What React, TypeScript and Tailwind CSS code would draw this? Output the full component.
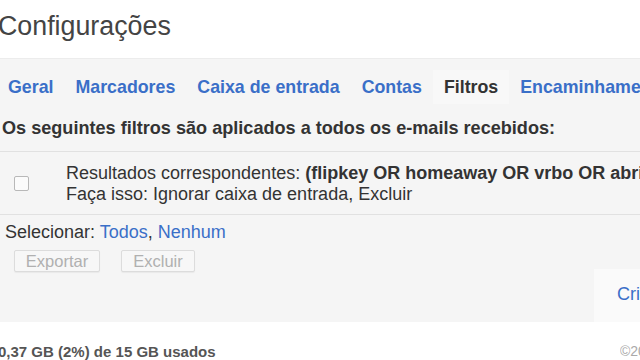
const tabs = [
  { label: "Geral", active: false },
  { label: "Marcadores", active: false },
  { label: "Caixa de entrada", active: false },
  { label: "Contas", active: false },
  { label: "Filtros", active: true },
  { label: "Encaminhamento e POP/IMAP", active: false },
];

export default function App() {
  return (
    <div
      className="w-[640px] h-[360px] overflow-hidden bg-white text-[#222]"
      style={{ fontFamily: '"Liberation Sans", Arial, sans-serif' }}
    >
      {/* Title */}
      <div className="h-[58px] pt-[11px]">
        <h1 className="-ml-[2px] text-[26.8px] leading-[30px] text-[#444] font-normal">Configurações</h1>
      </div>

      {/* Settings panel */}
      <div className="h-[264px] bg-[#f5f5f5] border-t border-[#ececec] flex flex-col">
        {/* Tabs */}
        <div className="mt-[11px] h-[34px] flex items-stretch whitespace-nowrap overflow-hidden">
          {tabs.map((t) => (
            <div
              key={t.label}
              className={`shrink-0 flex items-center text-[17.8px] font-bold px-[11px] first:pl-[8px] ${
                t.active ? "bg-[#f8f8f8] text-[#333]" : "text-[#3a6fc8]"
              }`}
            >
              {t.label}
            </div>
          ))}
        </div>

        {/* Heading */}
        <div className="mt-[13px] pl-[2px] text-[18.1px] leading-[22px] font-bold text-[#333] whitespace-nowrap">
          Os seguintes filtros são aplicados a todos os e-mails recebidos:
        </div>

        {/* Filter row */}
        <div className="mt-[12px] h-[64px] border-y border-[#e1e1e1] flex items-center whitespace-nowrap overflow-hidden">
          <div className="shrink-0 w-[66px] flex items-center pl-[14px]">
            <div className="w-[15px] h-[15px] rounded-[2px] border border-[#b8b8b8] bg-[#fbfbfb]" />
          </div>
          <div className="shrink-0 pt-[2px] text-[18px] leading-[21px] text-[#333]">
            <div>
              Resultados correspondentes: <b>(flipkey OR homeaway OR vrbo OR abritel)</b>
            </div>
            <div>Faça isso: Ignorar caixa de entrada, Excluir</div>
          </div>
        </div>

        {/* Select links */}
        <div className="mt-[6px] pl-[5px] text-[18px] leading-[22px] text-[#333] whitespace-nowrap">
          Selecionar: <span className="text-[#3a6fc8]">Todos</span>, <span className="text-[#3a6fc8]">Nenhum</span>
        </div>

        {/* Buttons */}
        <div className="mt-[7px] pl-[14px] flex gap-[21px]">
          <button className="w-[86px] h-[22px] rounded-[2px] border border-[#dcdcdc] bg-[#f7f7f7] text-[16.5px] leading-none text-[#b0b0b0] shadow-[0_1px_1px_rgba(0,0,0,0.05)]">
            Exportar
          </button>
          <button className="w-[74px] h-[22px] rounded-[2px] border border-[#dcdcdc] bg-[#f7f7f7] text-[16.5px] leading-none text-[#b0b0b0] shadow-[0_1px_1px_rgba(0,0,0,0.05)]">
            Excluir
          </button>
        </div>

        {/* Create link area */}
        <div className="flex-1 flex justify-end">
          <div className="mt-[-3px] w-[46px] bg-[#fafafa] pl-[23px] pt-[12px] whitespace-nowrap overflow-hidden">
            <span className="text-[18px] text-[#3a6fc8]">Criar um novo filtro</span>
          </div>
        </div>
      </div>

      {/* Footer */}
      <div className="h-[38px] pt-[21px] flex items-start justify-between whitespace-nowrap">
        <span className="-ml-[2px] text-[15px] leading-[17px] font-bold text-[#555]">0,37 GB (2%) de 15 GB usados</span>
        <span className="w-[20px] overflow-hidden text-[14px] leading-[17px] text-[#aaa]">©2013</span>
      </div>
    </div>
  );
}
